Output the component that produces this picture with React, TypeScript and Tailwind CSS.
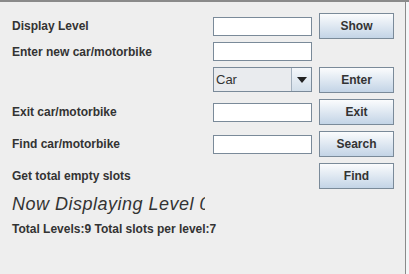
import React, { useState } from "react";

const font = { fontFamily: '"Liberation Sans", Arial, sans-serif' };

function Field() {
  return <input type="text" className="w-[99px] h-[19px] bg-white border border-[#7a8a99] outline-none px-1 text-xs" />;
}

function Btn({ label }: { label: string }) {
  return (
    <button className="w-[75px] h-[26px] border border-[#7a8a99] bg-gradient-to-b from-[#fbfcfd] to-[#c3d4e6] text-[12px] font-bold text-[#333]">
      {label}
    </button>
  );
}

function Row({ label, children, className }: { label?: string; children?: React.ReactNode; className?: string }) {
  return (
    <div className={"flex items-center " + (className || "")}>
      <div className="w-[201px] text-[12px] font-bold text-[#333] whitespace-nowrap">{label}</div>
      {children}
    </div>
  );
}

export default function App() {
  const [vehicle] = useState("Car");

  return (
    <div style={font} className="w-[409px] h-[274px] bg-[#eeeeee] flex overflow-hidden">
      <div className="w-[406px] h-full border-t-2 border-r border-[#8a8a8a] pl-3 pt-[11px]">
        <Row label="Display Level" className="h-[26px]">
          <Field />
          <div className="ml-[7px]"><Btn label="Show" /></div>
        </Row>
        <Row label="Enter new car/motorbike" className="h-[19px] mt-[3px]">
          <Field />
        </Row>
        <Row className="h-[25px] mt-[6px]">
          <div className="w-[99px] h-[25px] flex border border-[#7a8a99] bg-[#e9ebee]">
            <div className="flex-1 flex items-center pl-[2px] text-[13px] text-[#333]">{vehicle}</div>
            <div className="w-[20px] h-full border-l border-[#a3b0bd] bg-gradient-to-b from-[#f4f7fa] to-[#d3dfea] flex items-center justify-center">
              <svg width="10" height="6" viewBox="0 0 10 6"><path d="M0 0h10L5 6z" fill="#222" /></svg>
            </div>
          </div>
          <div className="ml-[7px]"><Btn label="Enter" /></div>
        </Row>
        <Row label="Exit car/motorbike" className="h-[26px] mt-[7px]">
          <Field />
          <div className="ml-[7px]"><Btn label="Exit" /></div>
        </Row>
        <Row label="Find car/motorbike" className="h-[26px] mt-[6px]">
          <Field />
          <div className="ml-[7px]"><Btn label="Search" /></div>
        </Row>
        <Row label="Get total empty slots" className="h-[26px] mt-[6px]">
          <div className="w-[99px]" />
          <div className="ml-[7px]"><Btn label="Find" /></div>
        </Row>
        <div className="w-[193px] overflow-hidden whitespace-nowrap italic text-[18px] tracking-[0.5px] text-[#333] mt-[3px] leading-[24px]">
          Now Displaying Level 0
        </div>
        <div className="text-[12px] font-bold text-[#333] mt-[4px] whitespace-nowrap">
          Total Levels:9 Total slots per level:7
        </div>
      </div>
      <div className="flex-1 h-full border-t-2 border-[#8a8a8a] bg-[#f4f6f8]" />
    </div>
  );
}
